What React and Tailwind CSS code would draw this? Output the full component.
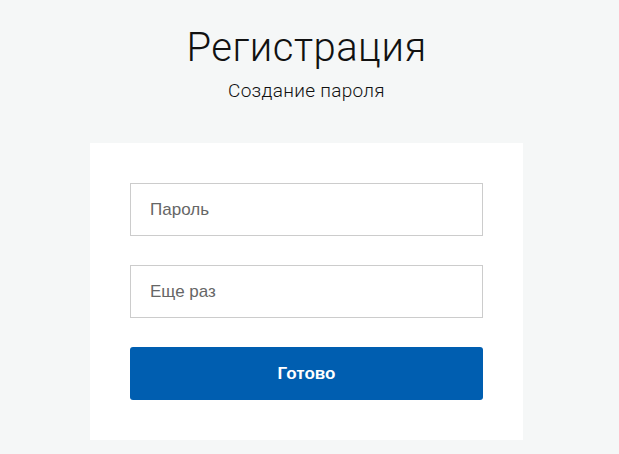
export default function App() {
  return (
    <div className="min-h-[454px] w-full bg-[#f5f7f7] flex flex-col items-center pt-[24px] pr-[6px]">
      <h1 className="text-[40px] leading-[48px] font-light text-[#111] font-['Roboto',sans-serif] tracking-[0.5px]">Регистрация</h1>
      <p className="mt-[7px] text-[19px] leading-[24px] font-light text-[#111] font-['Roboto',sans-serif] tracking-[0.3px]">Создание пароля</p>
      <div className="mt-[40px] w-[433px] bg-white px-[40px] py-[40px] flex flex-col gap-[29px] font-['Liberation_Sans',Arial,sans-serif]">
        <div className="h-[53px] border border-[#cccccc] flex items-center pl-[19px] text-[17px] text-[#666]">Пароль</div>
        <div className="h-[53px] border border-[#cccccc] flex items-center pl-[19px] text-[17px] text-[#666]">Еще раз</div>
        <button className="h-[53px] rounded-[3px] bg-[#005eb0] text-white text-[17px] font-bold">Готово</button>
      </div>
    </div>
  );
}
